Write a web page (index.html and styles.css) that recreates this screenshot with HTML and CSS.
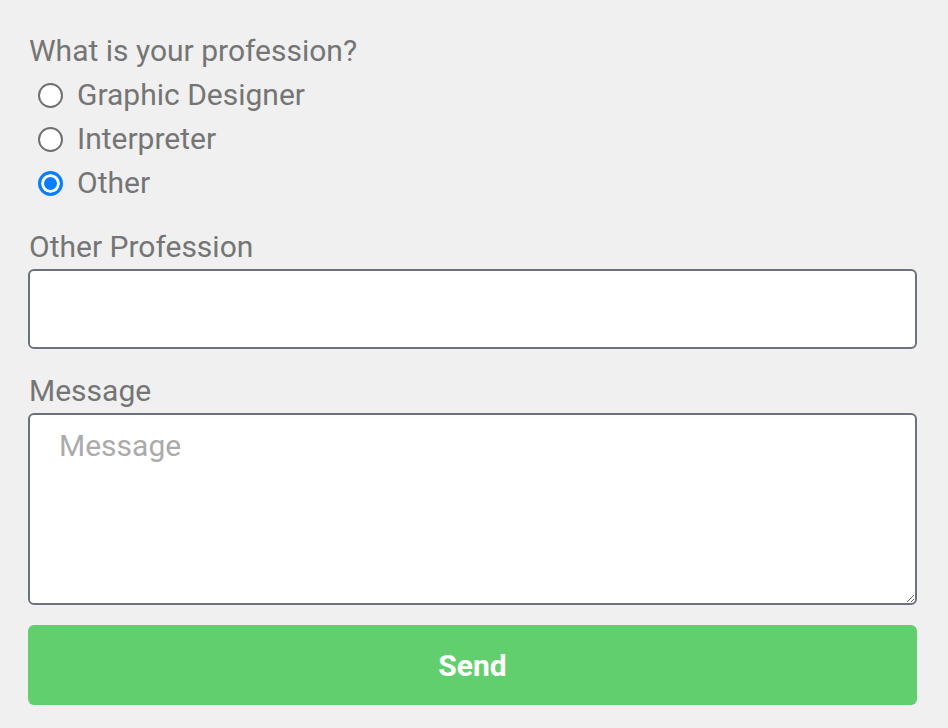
FILE: index.html
```html
<!DOCTYPE html>
<html>
<head>
<meta charset="utf-8">
<link rel="stylesheet" href="styles.css">
</head>
<body>
<form class="form">
  <div class="group">
    <div class="label">What is your profession?</div>
    <label class="radio"><input type="radio" name="prof"><span>Graphic Designer</span></label>
    <label class="radio"><input type="radio" name="prof"><span>Interpreter</span></label>
    <label class="radio"><input type="radio" name="prof" checked><span>Other</span></label>
  </div>
  <div class="group">
    <label class="label" for="other">Other Profession</label>
    <input class="field" id="other" type="text">
  </div>
  <div class="group">
    <label class="label" for="msg">Message</label>
    <textarea class="field area" id="msg" placeholder="Message"></textarea>
  </div>
  <button class="send" type="button">Send</button>
</form>
</body>
</html>
```
FILE: styles.css
```css
html, body {
  margin: 0;
  padding: 0;
  background: #f0f0f0;
}
body {
  font-family: Roboto, "Noto Sans", sans-serif;
  color: #757575;
  font-size: 30px;
}
.form {
  display: flex;
  flex-direction: column;
  gap: 20px;
  padding: 29px 31px 0 28px;
}
.group {
  display: flex;
  flex-direction: column;
}
.label {
  display: block;
  line-height: 44px;
  height: 44px;
  padding-left: 1px;
}
.radio {
  display: flex;
  align-items: center;
  height: 44px;
  line-height: 44px;
}
.radio input {
  appearance: none;
  -webkit-appearance: none;
  box-sizing: border-box;
  width: 25px;
  height: 25px;
  margin: 0 14px 0 10px;
  border: 2px solid #707070;
  border-radius: 50%;
  background: #fff;
}
.radio input:checked {
  border: 3px solid #0a7cff;
  background: #0a7cff;
  box-shadow: inset 0 0 0 3px #fff;
}
.field {
  box-sizing: border-box;
  width: 100%;
  height: 80px;
  margin: 0;
  border: 2px solid #6b727e;
  border-radius: 6px;
  background: #fff;
  font-family: Roboto, "Noto Sans", sans-serif;
  font-size: 30px;
  color: #757575;
}
.area {
  height: 192px;
  padding: 9px 29px;
  line-height: 44px;
  resize: vertical;
}
.area::placeholder {
  color: #ababab;
}
.send {
  height: 80px;
  border: none;
  border-radius: 6px;
  background: #62cf6f;
  color: #fff;
  font-family: Roboto, "Noto Sans", sans-serif;
  font-size: 30px;
  font-weight: 700;
}
```
